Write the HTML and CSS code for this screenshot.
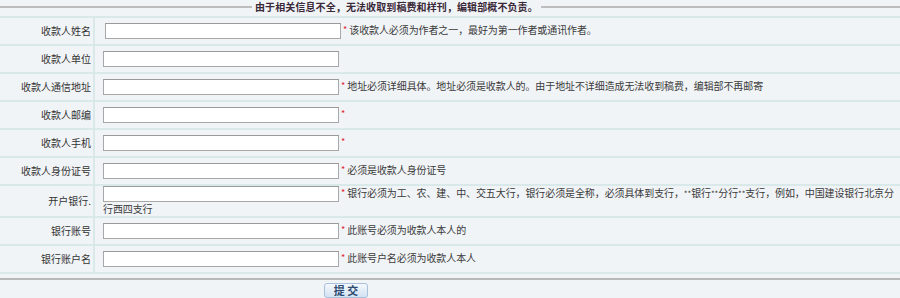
FILE: index.html
```html
<!DOCTYPE html>
<html lang="zh-CN">
<head>
    <meta charset="UTF-8">
    <title>收款人信息</title>
    <link rel="stylesheet" href="styles.css">
</head>
<body>
    <div class="notice">
        <span class="line lineLeft"></span>
        <span class="noticeText">由于相关信息不全，无法收取到稿费和样刊，编辑部概不负责。</span>
        <span class="line lineRight"></span>
    </div>
    <table class="payForm">
        <tr>
            <td class="label">收款人姓名</td>
            <td class="field"><input type="text" class="txt first"><span class="must">*</span> 该收款人必须为作者之一，最好为第一作者或通讯作者。</td>
        </tr>
        <tr>
            <td class="label">收款人单位</td>
            <td class="field"><input type="text" class="txt"></td>
        </tr>
        <tr>
            <td class="label">收款人通信地址</td>
            <td class="field"><input type="text" class="txt"><span class="must">*</span> 地址必须详细具体。地址必须是收款人的。由于地址不详细造成无法收到稿费，编辑部不再邮寄</td>
        </tr>
        <tr>
            <td class="label">收款人邮编</td>
            <td class="field"><input type="text" class="txt"><span class="must">*</span></td>
        </tr>
        <tr>
            <td class="label">收款人手机</td>
            <td class="field"><input type="text" class="txt"><span class="must">*</span></td>
        </tr>
        <tr>
            <td class="label">收款人身份证号</td>
            <td class="field"><input type="text" class="txt"><span class="must">*</span> 必须是收款人身份证号</td>
        </tr>
        <tr class="tall">
            <td class="label">开户银行.</td>
            <td class="field"><input type="text" class="txt"><span class="must">*</span> 银行必须为工、农、建、中、交五大行，银行必须是全称，必须具体到支行，<span class="star">**</span>银行<span class="star">**</span>分行<span class="star">**</span>支行，例如，中国建设银行北京分行西四支行</td>
        </tr>
        <tr>
            <td class="label">银行账号</td>
            <td class="field"><input type="text" class="txt"><span class="must">*</span> 此账号必须为收款人本人的</td>
        </tr>
        <tr>
            <td class="label">银行账户名</td>
            <td class="field"><input type="text" class="txt"><span class="must">*</span> 此账号户名必须为收款人本人</td>
        </tr>
    </table>
    <div class="bottom">
        <button type="button" class="btnSubmit">提 交</button>
    </div>
</body>
</html>
```

FILE: styles.css
```css
body{
    margin: 0;
    background-color: #f1f4f7;
    font-family: "Noto Sans CJK SC", "Liberation Sans", sans-serif;
    font-size: 10px;
    color: #333;
}
.notice{
    display: flex;
    align-items: center;
    height: 13px;
    margin-bottom: 3px;
}
.line{
    height: 2px;
    background-color: #bdbdbd;
}
.lineLeft{
    width: 252px;
}
.lineRight{
    flex: 1;
}
.noticeText{
    margin: 0 3px 0 3px;
    font-weight: bold;
    color: #3b2838;
    white-space: nowrap;
    letter-spacing: 0.1px;
}
.payForm{
    width: 100%;
    border-collapse: collapse;
}
.payForm td{
    border-top: 2px solid #d9e9ea;
    border-bottom: 2px solid #d9e9ea;
    height: 26px;
    padding: 0;
    line-height: 14px;
}
.payForm tr.tall td{
    height: 30px;
}
.label{
    width: 91px;
    text-align: right;
    padding-right: 2px !important;
    border-right: 2px solid #d9e9ea;
    white-space: nowrap;
}
.field{
    padding-left: 8px !important;
    padding-right: 6px !important;
    color: #3a3a3a;
    letter-spacing: -0.1px;
}
.txt{
    width: 236px;
    height: 16px;
    box-sizing: border-box;
    border: 1px solid #a8a8a8;
    border-top-color: #9a9a9a;
    background-color: #fff;
    margin: 0;
    padding: 0 2px;
    vertical-align: middle;
}
.txt.first{
    margin-left: 2px;
}
.must{
    color: #e2202a;
    font-size: 9px;
    vertical-align: top;
    margin-left: 2px;
}
.star{
    font-size: 8px;
}
.bottom{
    margin-top: 4px;
    border-top: 2px solid #b9b9b9;
    padding: 3px 0 0 324px;
}
.btnSubmit{
    width: 44px;
    height: 15px;
    padding: 0;
    border: 1px solid #a8c0dc;
    border-radius: 3px;
    background: linear-gradient(#f4f8fc, #d3e2f2);
    font-family: "Noto Sans CJK SC", sans-serif;
    font-size: 11px;
    font-weight: bold;
    line-height: 13px;
    color: #2c4a72;
    cursor: pointer;
}
```
